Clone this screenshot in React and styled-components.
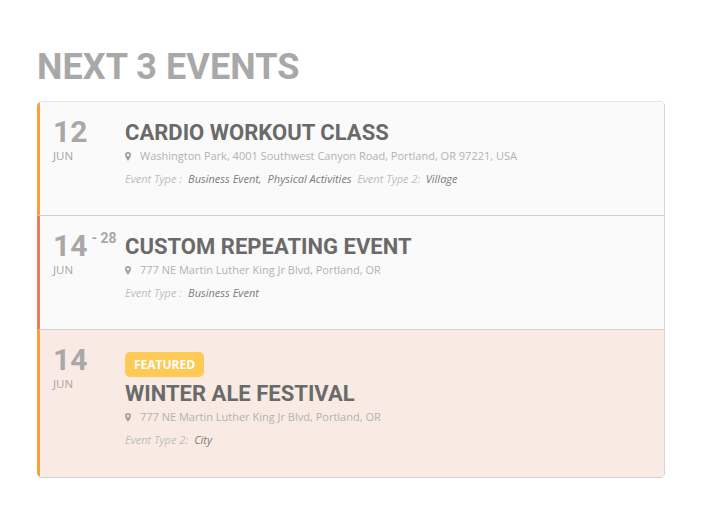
import React from "react";
import styled, { createGlobalStyle } from "styled-components";

const Global = createGlobalStyle`
  html, body { margin: 0; padding: 0; background: #fff; }
  body { font-family: "Open Sans", sans-serif; }
`;

const Page = styled.div`
  width: 705px;
  height: 526px;
  padding: 46px 40px 0 37px;
  box-sizing: border-box;
`;

const Heading = styled.h2`
  margin: 0 0 13px;
  font: 700 36px/42px Roboto, sans-serif;
  letter-spacing: 0.08px;
  color: #a8a8a8;
`;

const List = styled.div`
  width: 628px;
  box-sizing: border-box;
  border-radius: 5px;
  overflow: hidden;
  border-top: 1px solid #e6e6e6;
  border-right: 1px solid #d4d4d4;
  border-bottom: 1px solid #d0d0d0;
`;

const Row = styled.div`
  display: flex;
  box-sizing: border-box;
  height: ${(p) => p.$h}px;
  background: ${(p) => (p.$featured ? "#f9ebe3" : "#fafafa")};
  border-left: 3px solid ${(p) => p.$accent};
  border-bottom: ${(p) => (p.$last ? "0" : "1px solid #cfcfcf")};
  padding-top: 14px;
`;

const DateCol = styled.div`
  width: 85px;
  padding: 1px 0 0 13px;
  box-sizing: border-box;
  flex: none;
`;

const DateLine = styled.div`
  display: flex;
  align-items: flex-start;
  white-space: nowrap;
  font: 700 30px/30px Roboto, sans-serif;
  color: #a8a8a8;
`;

const DateEnd = styled.span`
  font: 700 14px/14px Roboto, sans-serif;
  margin-left: 4px;
  color: #a8a8a8;
`;

const Month = styled.div`
  font: 400 11.5px/14px "Open Sans", sans-serif;
  color: #a6a6a6;
  margin-top: 2px;
`;

const Body = styled.div`
  min-width: 0;
  padding-top: ${(p) => p.$top}px;
`;

const Badge = styled.span`
  display: block;
  width: fit-content;
  box-sizing: border-box;
  height: 25px;
  padding: 0 9px;
  background: #ffc956;
  border-radius: 5px;
  color: #fff;
  font: 700 12px/25px "Open Sans", sans-serif;
  margin-bottom: 3px;
`;

const Title = styled.h3`
  margin: 0;
  font: 700 22px/27px Roboto, sans-serif;
  letter-spacing: 0.02px;
  color: #6a6a6a;
  white-space: nowrap;
`;

const Location = styled.div`
  display: flex;
  align-items: center;
  gap: 9px;
  margin-top: 2px;
  font: 400 11px/16px "Open Sans", sans-serif;
  color: #b2b2b2;
  white-space: nowrap;
`;

const Pin = styled.svg`
  width: 6px;
  height: 9px;
  flex: none;
  fill: #a0a0a0;
`;

const Meta = styled.div`
  display: flex;
  margin-top: 7px;
  font: italic 400 11px/16px "Open Sans", sans-serif;
  white-space: pre;
`;

const MetaLabel = styled.span`
  color: #bdbdbd;
  margin-right: ${(p) => p.$gap}px;
`;

const MetaValue = styled.span`
  color: #7c7c7c;
  margin-right: ${(p) => p.$gap || 0}px;
`;

const PinIcon = () => (
  <Pin viewBox="0 0 12 18">
    <path fillRule="evenodd" d="M6 0a6 6 0 0 1 6 6c0 3-3.500 8.500-6 12C3.500 14.500 0 9 0 6a6 6 0 0 1 6-6zm0 3.500a2.500 2.500 0 1 0 0 5 2.500 2.500 0 0 0 0-5z" />
  </Pin>
);

export default function App() {
  return (
    <Page>
      <Global />
      <Heading>NEXT 3 EVENTS</Heading>
      <List>
        <Row $h={114} $accent="#fa9f3c">
          <DateCol>
            <DateLine>12</DateLine>
            <Month>JUN</Month>
          </DateCol>
          <Body $top={3}>
            <Title>CARDIO WORKOUT CLASS</Title>
            <Location>
              <PinIcon />
              Washington Park, 4001 Southwest Canyon Road, Portland, OR 97221, USA
            </Location>
            <Meta>
              <MetaLabel $gap={6}>Event Type :</MetaLabel>
              <MetaValue $gap={6}>Business Event,</MetaValue>
              <MetaValue $gap={5.5}>Physical Activities</MetaValue>
              <MetaLabel $gap={5.5}>Event Type 2:</MetaLabel>
              <MetaValue>Village</MetaValue>
            </Meta>
          </Body>
        </Row>
        <Row $h={114} $accent="#ed7c5e">
          <DateCol>
            <DateLine>
              14<DateEnd>- 28</DateEnd>
            </DateLine>
            <Month>JUN</Month>
          </DateCol>
          <Body $top={3}>
            <Title>CUSTOM REPEATING EVENT</Title>
            <Location>
              <PinIcon />
              777 NE Martin Luther King Jr Blvd, Portland, OR
            </Location>
            <Meta>
              <MetaLabel $gap={6}>Event Type :</MetaLabel>
              <MetaValue>Business Event</MetaValue>
            </Meta>
          </Body>
        </Row>
        <Row $h={147} $accent="#fa9f3c" $featured $last>
          <DateCol>
            <DateLine>14</DateLine>
            <Month>JUN</Month>
          </DateCol>
          <Body $top={8}>
            <Badge>FEATURED</Badge>
            <Title>WINTER ALE FESTIVAL</Title>
            <Location>
              <PinIcon />
              777 NE Martin Luther King Jr Blvd, Portland, OR
            </Location>
            <Meta>
              <MetaLabel $gap={6}>Event Type 2:</MetaLabel>
              <MetaValue>City</MetaValue>
            </Meta>
          </Body>
        </Row>
      </List>
    </Page>
  );
}
